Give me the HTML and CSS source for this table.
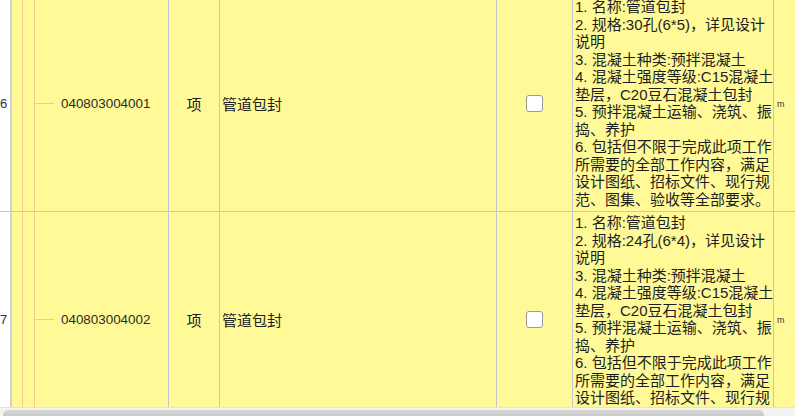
FILE: index.html
```html
<!DOCTYPE html>
<html lang="zh-CN">
<head>
<meta charset="utf-8">
<title>清单</title>
<link rel="stylesheet" href="styles.css">
</head>
<body>
<div class="viewport">
  <div class="grid">
    <div class="row">
      <div class="c num">6</div>
      <div class="c tree"><span class="branch"></span><span class="code">040803004001</span></div>
      <div class="c unit">项</div>
      <div class="c name">管道包封</div>
      <div class="c chk"><input type="checkbox" class="box"></div>
      <div class="c desc">1. 名称:管道包封<br>2. 规格:30孔(6*5)，详见设计<br>说明<br>3. 混凝土种类:预拌混凝土<br>4. 混凝土强度等级:C15混凝土<br>垫层，C20豆石混凝土包封<br>5. 预拌混凝土运输、浇筑、振<br>捣、养护<br>6. 包括但不限于完成此项工作<br>所需要的全部工作内容，满足<br>设计图纸、招标文件、现行规<br>范、图集、验收等全部要求。</div>
      <div class="c um">m</div>
    </div>
    <div class="row">
      <div class="c num">7</div>
      <div class="c tree"><span class="branch"></span><span class="code">040803004002</span></div>
      <div class="c unit">项</div>
      <div class="c name">管道包封</div>
      <div class="c chk"><input type="checkbox" class="box"></div>
      <div class="c desc">1. 名称:管道包封<br>2. 规格:24孔(6*4)，详见设计<br>说明<br>3. 混凝土种类:预拌混凝土<br>4. 混凝土强度等级:C15混凝土<br>垫层，C20豆石混凝土包封<br>5. 预拌混凝土运输、浇筑、振<br>捣、养护<br>6. 包括但不限于完成此项工作<br>所需要的全部工作内容，满足<br>设计图纸、招标文件、现行规<br>范、图集、验收等全部要求。</div>
      <div class="c um">m</div>
    </div>
  </div>
</div>
<div class="hscroll"><div class="thumb"></div></div>
</body>
</html>
```
FILE: styles.css
```css
html, body {
  margin: 0;
  padding: 0;
  background: #ffffff;
  overflow: hidden;
}
body {
  width: 795px;
  height: 416px;
  font-family: "Noto Sans CJK SC", "Liberation Sans", sans-serif;
  color: #222222;
}
.viewport {
  height: 408px;
  overflow: hidden;
  border-bottom: 1px solid #e2e2e2;
  box-sizing: border-box;
}
.grid {
  margin-top: -4px;
  width: 860px;
}
.row {
  display: flex;
  height: 216px;
  border-bottom: 1px solid #c8c8cc;
  box-sizing: border-box;
}
.c {
  box-sizing: border-box;
  background: #fffa97;
  border-right: 1px solid #c4c4cc;
  display: flex;
  align-items: center;
  flex: none;
}
.num {
  width: 12px;
  background: #ffffff;
  border-right: 2px solid #d2d2d2;
  justify-content: flex-end;
  padding-right: 6px;
  overflow: hidden;
  font-family: "Liberation Sans", sans-serif;
  font-size: 13px;
  color: #333333;
  direction: rtl;
}
.tree {
  width: 157px;
  background:
    linear-gradient(#f8c98c, #f8c98c) no-repeat 10px 0 / 1px 100%,
    linear-gradient(#f8c98c, #f8c98c) no-repeat 22px 0 / 1px 100%,
    #fffa97;
}
.branch {
  display: block;
  width: 19px;
  height: 1px;
  margin-left: 23px;
  background: #f8c98c;
}
.code {
  margin-left: 7px;
  font-family: "Liberation Sans", sans-serif;
  font-size: 13.4px;
  color: #2a2a2a;
}
.unit {
  width: 51px;
  justify-content: center;
  font-size: 15px;
}
.name {
  width: 277px;
  padding-left: 2px;
  font-size: 15px;
}
.chk {
  width: 76px;
  justify-content: center;
  padding-right: 1px;
}
.box {
  appearance: none;
  -webkit-appearance: none;
  margin: 0;
  width: 17px;
  height: 17px;
  border: 1px solid #9a9a9a;
  border-radius: 3px;
  background: #ffffff;
  box-sizing: border-box;
}
.desc {
  width: 201px;
  padding: 2px 0 3px 2px;
  align-items: flex-start;
  font-family: "Liberation Sans", "Noto Sans CJK SC", sans-serif;
  font-size: 15px;
  line-height: 17.5px;
  white-space: nowrap;
  color: #1e1e1e;
}
.um {
  width: 40px;
  padding-left: 3px;
  font-family: "Liberation Sans", sans-serif;
  font-size: 9px;
  color: #333333;
  border-right: none;
}
.hscroll {
  height: 8px;
  background: #f3f3f3;
  padding: 2px 0 0 3px;
  box-sizing: border-box;
}
.thumb {
  width: 761px;
  height: 10px;
  border-radius: 5px;
  background: linear-gradient(#d6d6d6, #c2c2c2);
}
```
